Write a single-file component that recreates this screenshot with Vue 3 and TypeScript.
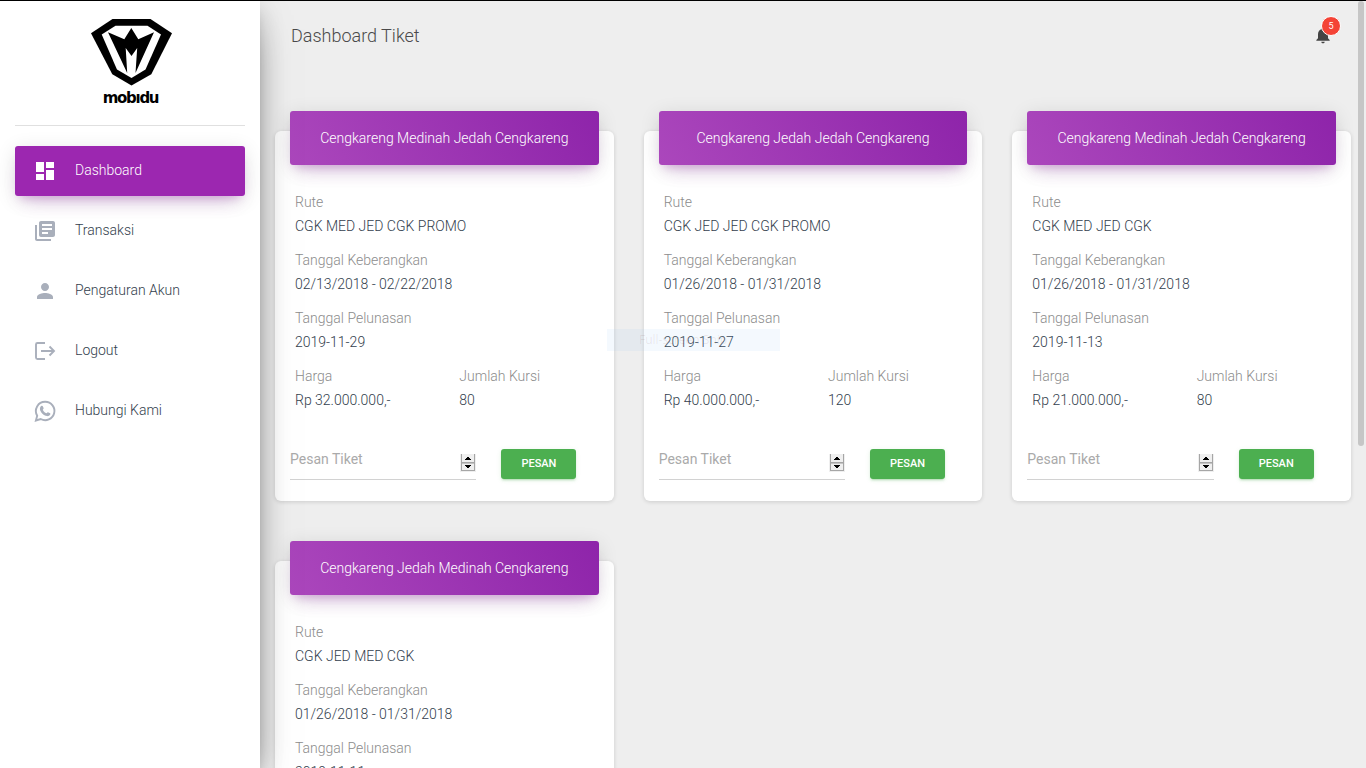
<script setup lang="ts">
interface Ticket {
  title: string
  route: string
  dates: string
  payment: string
  price: string
  seats: number
}

const menu: { id: string; label: string }[] = [
  { id: 'dashboard', label: 'Dashboard' },
  { id: 'orders', label: 'Transaksi' },
  { id: 'account', label: 'Pengaturan Akun' },
  { id: 'logout', label: 'Logout' },
  { id: 'contact', label: 'Hubungi Kami' },
]

const tickets: Ticket[] = [
  { title: 'Cengkareng Medinah Jedah Cengkareng', route: 'CGK MED JED CGK PROMO', dates: '02/13/2018 - 02/22/2018', payment: '2019-11-29', price: 'Rp 32.000.000,-', seats: 80 },
  { title: 'Cengkareng Jedah Jedah Cengkareng', route: 'CGK JED JED CGK PROMO', dates: '01/26/2018 - 01/31/2018', payment: '2019-11-27', price: 'Rp 40.000.000,-', seats: 120 },
  { title: 'Cengkareng Medinah Jedah Cengkareng', route: 'CGK MED JED CGK', dates: '01/26/2018 - 01/31/2018', payment: '2019-11-13', price: 'Rp 21.000.000,-', seats: 80 },
  { title: 'Cengkareng Jedah Medinah Cengkareng', route: 'CGK JED MED CGK', dates: '01/26/2018 - 01/31/2018', payment: '2019-11-11', price: 'Rp 21.000.000,-', seats: 80 },
]
</script>

<template>
  <div class="app">
    <aside class="sidebar">
      <div class="brand">
        <svg class="mark" width="84" height="68" viewBox="0 0 84 68">
          <polygon points="22.5,1 60.5,1 82,15.3 61.3,56.3 41.5,67.5 22.3,56.3 1,15.3" fill="#000" />
          <polygon points="25.5,7.700 57.5,7.700 71,16.5 55.5,51.5 41.5,60 27,51.5 11.7,16.5" fill="#fff" />
          <polygon points="18,14.3 34.3,21.3 41.3,10 48.3,21.3 64,14.3 45.5,55 47.2,30 41.5,38 35.7,30 37.2,55" fill="#000" />
        </svg>
        <div class="brand-name">mobıdu</div>
      </div>
      <nav class="menu">
        <a v-for="(item, i) in menu" :key="item.id" class="item" :class="{ active: i === 0 }">
          <svg class="icon" width="24" height="24" viewBox="0 0 24 24" fill="currentColor">
            <path v-if="item.id === 'dashboard'" d="M3 13h8V3H3v10zm0 8h8v-6H3v6zm10 0h8V11h-8v10zm0-18v6h8V3h-8z" />
            <path v-else-if="item.id === 'orders'" d="M4 6H2v14c0 1.1.9 2 2 2h14v-2H4V6zm16-4H8c-1.1 0-2 .9-2 2v12c0 1.1.9 2 2 2h12c1.1 0 2-.9 2-2V4c0-1.1-.9-2-2-2zm-1 9H9V9h10v2zm-4 4H9v-2h6v2zm4-8H9V5h10v2z" />
            <path v-else-if="item.id === 'account'" d="M12 12c2.21 0 4-1.79 4-4s-1.79-4-4-4-4 1.79-4 4 1.79 4 4 4zm0 2c-2.67 0-8 1.34-8 4v2h16v-2c0-2.66-5.33-4-8-4z" />
            <g v-else-if="item.id === 'logout'" fill="none" stroke="currentColor" stroke-width="1.9">
              <path d="M12 4H4.500Q3 4 3 5.500v13Q3 20 4.500 20H12" />
              <path d="M8 12h13M16.500 7.500L21 12l-4.500 4.500" />
            </g>
            <g v-else>
              <path d="M12.200 2.800a9.200 9.200 0 1 1-4.500 17.200L2.900 21.500l1.300-4.800A9.200 9.200 0 0 1 12.200 2.800z" fill="none" stroke="currentColor" stroke-width="1.9" />
              <path d="M8.500 6.800c.5-.3 1-.2 1.300.4l.8 1.900c.2.5-.3 1-.8 1.600.8 1.700 2 2.800 3.700 3.600.6-.4.9-1.200 1.500-1.100l2.100 1c.4.3.3 1 0 1.600-.6 1-1.900 1.500-3 1.300-3.700-.7-6.900-3.900-7.200-7.100 0-1.300.7-2.700 1.600-3.200z" />
            </g>
          </svg>
          <span>{{ item.label }}</span>
        </a>
      </nav>
    </aside>

    <main class="main">
      <header class="topbar">
        <h1>Dashboard Tiket</h1>
        <div class="bell">
          <svg width="20" height="20" viewBox="0 0 24 24" fill="#444">
            <path d="M12 22c1.1 0 2-.9 2-2h-4c0 1.1.9 2 2 2zm6-6v-5c0-3.07-1.64-5.64-4.5-6.32V4c0-.83-.67-1.500-1.500-1.500s-1.500.67-1.500 1.500v.68C7.630 5.360 6 7.920 6 11v5l-2 2v1h16v-1l-2-2z" />
          </svg>
          <span class="badge">5</span>
        </div>
      </header>

      <section class="cards">
        <article v-for="(t, i) in tickets" :key="i" class="card">
          <div class="card-title">{{ t.title }}</div>
          <dl class="details">
            <div class="field"><dt>Rute</dt><dd>{{ t.route }}</dd></div>
            <div class="field"><dt>Tanggal Keberangkan</dt><dd>{{ t.dates }}</dd></div>
            <div class="field"><dt>Tanggal Pelunasan</dt><dd>{{ t.payment }}</dd></div>
            <div class="pair">
              <div class="field"><dt>Harga</dt><dd>{{ t.price }}</dd></div>
              <div class="field"><dt>Jumlah Kursi</dt><dd>{{ t.seats }}</dd></div>
            </div>
          </dl>
          <div class="order">
            <div class="quantity">
              <span>Pesan Tiket</span>
              <svg class="spinner" width="16" height="18" viewBox="0 0 16 18" shape-rendering="crispEdges">
                <rect width="16" height="18" fill="#efefef" />
                <path d="M1 0h1v17h-1zM14 0h1v17h-1zM1 8h14v1H1zM1 16h14v1H1z" fill="#a6a6a6" />
                <path d="M2 9h12v1H2z" fill="#c4c4c4" />
                <path d="M7 3h2v1h1v1h1v1H5V5h1V4h1zM5 11h6v1h-1v1H9v1H7v-1H6v-1H5z" fill="#000" />
              </svg>
            </div>
            <button type="button">PESAN</button>
          </div>
        </article>
      </section>
    </main>

    <div class="snip">Full-screen Snip</div>
    <div class="scrollbar"></div>
  </div>
</template>

<style>
body {
  margin: 0;
  overflow: hidden;
}
</style>

<style scoped>
.app {
  box-sizing: border-box;
  position: relative;
  display: flex;
  width: 1366px;
  height: 768px;
  overflow: hidden;
  border-top: 1px solid #000;
  background: #eee;
  font-family: Roboto, "Liberation Sans", sans-serif;
  font-size: 14px;
  font-weight: 300;
  color: #333e4d;
}
.sidebar {
  position: relative;
  z-index: 2;
  flex: none;
  width: 260px;
  height: 767px;
  background: #fff;
  box-shadow: 0 16px 38px -12px rgba(0, 0, 0, 0.56), 0 4px 25px 0 rgba(0, 0, 0, 0.12), 0 8px 10px -5px rgba(0, 0, 0, 0.2);
}
.brand {
  display: flex;
  flex-direction: column;
  align-items: center;
  box-sizing: border-box;
  height: 125px;
  margin: 0 15px;
  padding: 17px 0 0 3px;
  border-bottom: 1px solid #e0e0e0;
}
.mark {
  display: block;
}
.brand-name {
  margin: 3px 0 0 -2px;
  font-family: "DejaVu Sans", sans-serif;
  font-size: 15px;
  font-weight: 700;
  letter-spacing: -1.3px;
  line-height: 18px;
  color: #000;
}
.menu {
  display: flex;
  flex-direction: column;
  gap: 10px;
  padding: 20px 15px;
}
.item {
  display: flex;
  align-items: center;
  gap: 18px;
  box-sizing: border-box;
  height: 50px;
  padding-left: 18px;
  border-radius: 3px;
}
.item span {
  margin-top: -2px;
}
.icon {
  color: #a9afbb;
}
.active,
.active .icon {
  color: #fff;
}
.active {
  background: #9c27b0;
  box-shadow: 0 12px 20px -10px rgba(156, 39, 176, 0.28), 0 4px 20px 0 rgba(0, 0, 0, 0.12), 0 7px 8px -5px rgba(156, 39, 176, 0.2);
}
.main {
  width: 1106px;
}
.topbar {
  display: flex;
  align-items: center;
  justify-content: space-between;
  box-sizing: border-box;
  height: 70px;
  padding: 0 33px 2px 31px;
}
h1 {
  margin: 0;
  font-size: 18px;
  font-weight: 300;
  color: #4a4a4a;
}
.bell {
  position: relative;
  width: 20px;
  height: 20px;
}
.bell svg {
  display: block;
}
.badge {
  position: absolute;
  top: -9px;
  left: 8px;
  width: 18px;
  height: 18px;
  border: 1px solid #fff;
  border-radius: 10px;
  background: #f44336;
  color: #fff;
  font-size: 9px;
  font-weight: 400;
  line-height: 19px;
  text-align: center;
}
.cards {
  display: grid;
  grid-template-columns: repeat(3, 1fr);
  gap: 60px 30px;
  padding: 60px 15px 0;
}
.card {
  box-sizing: border-box;
  height: 370px;
  padding: 0 15px;
  border-radius: 6px;
  background: #fff;
  box-shadow: 0 1px 4px rgba(0, 0, 0, 0.14);
}
.card-title {
  height: 54px;
  margin-top: -20px;
  border-radius: 3px;
  background: linear-gradient(60deg, #ab47bc, #8e24aa);
  box-shadow: 0 12px 20px -10px rgba(156, 39, 176, 0.28), 0 4px 20px 0 rgba(0, 0, 0, 0.12), 0 7px 8px -5px rgba(156, 39, 176, 0.2);
  color: #fff;
  line-height: 54px;
  text-align: center;
}
.details {
  display: flex;
  flex-direction: column;
  gap: 10px;
  margin: 0;
  padding: 25px 5px 0;
  line-height: 24px;
}
.pair {
  display: grid;
  grid-template-columns: 1fr 1fr;
  gap: 30px;
}
.field dt {
  color: #8c8c8c;
}
.field dd {
  margin: 0;
  white-space: nowrap;
}
.order {
  display: flex;
  align-items: flex-end;
  gap: 25px;
  margin-top: 36px;
}
.quantity {
  display: flex;
  justify-content: space-between;
  box-sizing: border-box;
  width: 186.400px;
  height: 32px;
  border-bottom: 1px solid #d2d2d2;
  color: #aaa;
  font-weight: 400;
}
.quantity span {
  line-height: 22px;
}
.spinner {
  margin-top: 6px;
}
button {
  width: 75px;
  height: 30px;
  margin-bottom: 1px;
  padding: 0;
  border: 0;
  border-radius: 3px;
  background: #4caf50;
  box-shadow: 0 2px 2px 0 rgba(76, 175, 80, 0.14), 0 3px 1px -2px rgba(76, 175, 80, 0.2), 0 1px 5px 0 rgba(76, 175, 80, 0.12);
  color: #fff;
  font: 500 11px/30px Roboto, sans-serif;
}
.snip {
  position: absolute;
  top: 328px;
  left: 607px;
  box-sizing: border-box;
  width: 173px;
  height: 22px;
  padding-left: 32px;
  background: rgba(145, 200, 245, 0.1);
  color: rgba(110, 50, 50, 0.1);
  font: 400 12px/22px "Open Sans", sans-serif;
}
.scrollbar {
  position: absolute;
  z-index: 3;
  top: 0;
  right: 2px;
  width: 6px;
  height: 445px;
  border-radius: 3px;
  background: #c6c6c6;
}
</style>
